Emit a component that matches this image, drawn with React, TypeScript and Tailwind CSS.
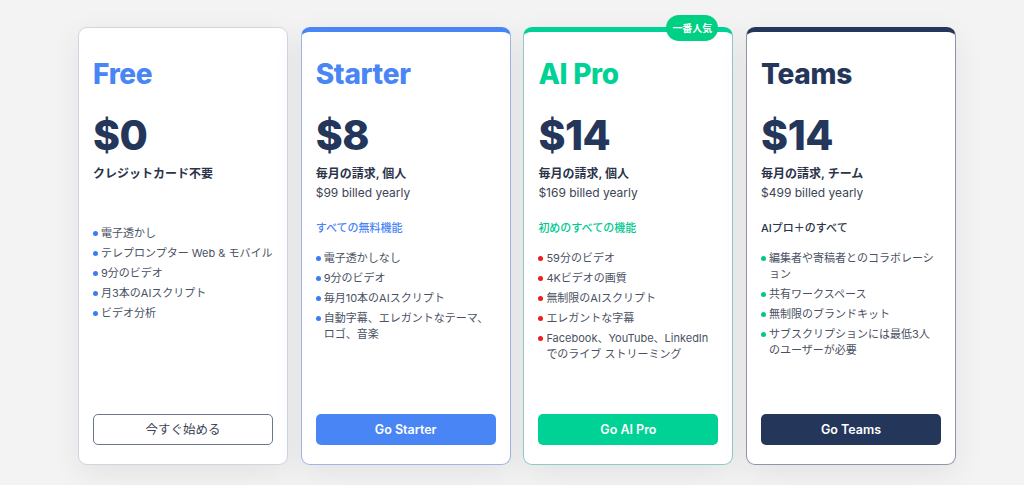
import React from "react";

type Plan = {
  name: string;
  price: string;
  sub: string;
  yearly?: string;
  heading?: string;
  features: string[];
  cta: string;
  titleColor: string;
  border: string;
  dot: string;
  heading_color: string;
  button: string;
  badge?: string;
};

const plans: Plan[] = [
  {
    name: "Free",
    price: "$0",
    sub: "クレジットカード不要",
    features: ["電子透かし", "テレプロンプター Web & モバイル", "9分のビデオ", "月3本のAIスクリプト", "ビデオ分析"],
    cta: "今すぐ始める",
    titleColor: "text-[#4a85f6]",
    border: "border-[#cfd6e2]",
    dot: "bg-[#3b7cf5]",
    heading_color: "",
    button: "border border-[#6b7590] bg-white text-[#3d4455] font-normal",
  },
  {
    name: "Starter",
    price: "$8",
    sub: "毎月の請求, 個人",
    yearly: "$99 billed yearly",
    heading: "すべての無料機能",
    features: ["電子透かしなし", "9分のビデオ", "毎月10本のAIスクリプト", "自動字幕、エレガントなテーマ、\nロゴ、音楽"],
    cta: "Go Starter",
    titleColor: "text-[#4a85f6]",
    border: "border-[#9db6e6] border-t-[#4a85f6]",
    dot: "bg-[#3b7cf5]",
    heading_color: "text-[#4a85f6]",
    button: "bg-[#4a85f6] text-white font-semibold",
  },
  {
    name: "AI Pro",
    price: "$14",
    sub: "毎月の請求, 個人",
    yearly: "$169 billed yearly",
    heading: "初めのすべての機能",
    features: ["59分のビデオ", "4Kビデオの画質", "無制限のAIスクリプト", "エレガントな字幕", "Facebook、YouTube、LinkedIn\nでのライブ ストリーミング"],
    cta: "Go AI Pro",
    titleColor: "text-[#00d195]",
    border: "border-[#8ccbc6] border-t-[#00d195]",
    dot: "bg-[#f01c1c]",
    heading_color: "text-[#00c98f]",
    button: "bg-[#00d195] text-white font-semibold",
    badge: "一番人気",
  },
  {
    name: "Teams",
    price: "$14",
    sub: "毎月の請求, チーム",
    yearly: "$499 billed yearly",
    heading: "AIプロ＋のすべて",
    features: ["編集者や寄稿者とのコラボレーシ\nョン", "共有ワークスペース", "無制限のブランドキット", "サブスクリプションには最低3人\nのユーザーが必要"],
    cta: "Go Teams",
    titleColor: "text-[#24365a]",
    border: "border-[#8b95ab] border-t-[#24365a]",
    dot: "bg-[#00c98f]",
    heading_color: "text-[#2b3448]",
    button: "bg-[#24365a] text-white font-semibold",
  },
];

function Card({ plan, first }: { plan: Plan; first: boolean }) {
  return (
    <div
      className={`relative flex h-[438px] w-[210px] flex-col rounded-[9px] border bg-white px-[14px] shadow-[0_8px_30px_rgba(0,0,0,0.07)] ${plan.border} ${
        first ? "pt-[28px]" : "border-t-[5px] pt-[24px]"
      }`}
    >
      {plan.badge && (
        <span className="absolute right-[14px] top-[-17px] rounded-full bg-[#00d084] px-[6px] py-[5px] text-[10px] font-bold leading-[16px] text-white">
          {plan.badge}
        </span>
      )}
      <h2 className={`text-[28px] font-extrabold leading-[36px] tracking-[-0.3px] ${plan.titleColor}`}>{plan.name}</h2>
      <div className="mt-[18px] text-[41px] font-extrabold leading-[50px] tracking-[-0.5px] text-[#24365a]">{plan.price}</div>
      <div className="mt-[5px] text-[12px] font-semibold leading-[18px] text-[#2b3448]">{plan.sub}</div>
      {plan.yearly && <div className="mt-[1px] text-[12px] leading-[18px] text-[#3d4455]">{plan.yearly}</div>}
      {plan.heading && (
        <div className={`mt-[18px] text-[11px] font-medium leading-[16px] ${plan.heading_color}`}>{plan.heading}</div>
      )}
      <ul className={`flex flex-col gap-[4px] ${first ? "mt-[42px]" : "mt-[14px]"}`}>
        {plan.features.map((f) => (
          <li key={f} className="flex items-start gap-[3px] text-[11px] leading-[16px] text-[#4a5163]">
            <span className={`mt-[6px] h-[5px] w-[5px] shrink-0 rounded-full ${plan.dot}`} />
            <span className="whitespace-pre">{f}</span>
          </li>
        ))}
      </ul>
      <button
        className={`mb-[19px] mt-auto h-[31px] w-full rounded-[5px] text-[12.5px] leading-[16px] ${plan.button}`}
      >
        {plan.cta}
      </button>
    </div>
  );
}

export default function App() {
  return (
    <div
      className="flex h-[485px] w-[1024px] gap-[12.7px] bg-[#f3f3f3] pl-[78px] pt-[27px]"
      style={{ fontFamily: 'Inter, "Noto Sans CJK JP", sans-serif' }}
    >
      {plans.map((p, i) => (
        <Card key={p.name} plan={p} first={i === 0} />
      ))}
    </div>
  );
}
